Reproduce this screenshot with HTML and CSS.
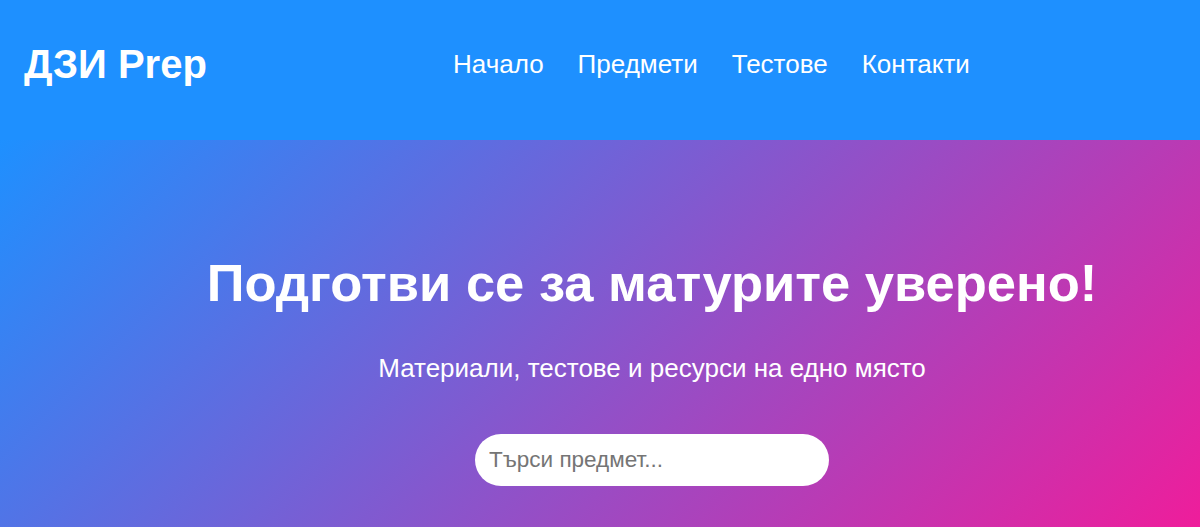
FILE: index.html
```html
<!DOCTYPE html>
<html lang="bg">
<head>
    <meta charset="UTF-8">
    <meta name="viewport" content="width=device-width, initial-scale=1.0">
    <title>ДЗИ Prep</title>
    <link rel="stylesheet" href="styles.css">
</head>
<body>
    <header class="header">
        <div class="logo">ДЗИ Prep</div>
        <nav class="nav">
            <ul>
                <li><a href="#">Начало</a></li>
                <li><a href="#">Предмети</a></li>
                <li><a href="#">Тестове</a></li>
                <li><a href="#">Контакти</a></li>
            </ul>
        </nav>
    </header>

    <section class="hero">
        <h1>Подготви се за матурите уверено!</h1>
        <p>Материали, тестове и ресурси на едно място</p>
        <input type="text" class="search" placeholder="Търси предмет...">
    </section>
</body>
</html>
```

FILE: styles.css
```css
body {
    font-family: "Liberation Sans", Arial, sans-serif;
    margin: 0;
    padding: 0;
    color: white;
}
.header {
    display: flex;
    align-items: center;
    height: 140px;
    padding: 0 24px 12px;
    box-sizing: border-box;
    background-color: #1e90ff;
}
.logo {
    font-size: 40px;
    font-weight: bold;
}
.nav {
    margin: 0 auto;
}
.nav ul {
    display: flex;
    gap: 34px;
    list-style: none;
    margin: 0;
    padding-left: 40px;
}
.nav a {
    color: white;
    text-decoration: none;
    font-size: 26px;
}
.hero {
    min-height: 400px;
    padding: 112px 0 0 104px;
    text-align: center;
    background: linear-gradient(135deg, #1e90ff, #ff1493);
}
.hero h1 {
    font-size: 52.5px;
    margin: 0 0 40px;
}
.hero p {
    font-size: 26px;
    margin: 0 0 50px;
}
.search {
    width: 354px;
    height: 52px;
    box-sizing: border-box;
    padding: 0 14px;
    border: none;
    border-radius: 26px;
    font-family: inherit;
    font-size: 22.5px;
    outline: none;
}
.search::placeholder {
    color: #757575;
}
```
